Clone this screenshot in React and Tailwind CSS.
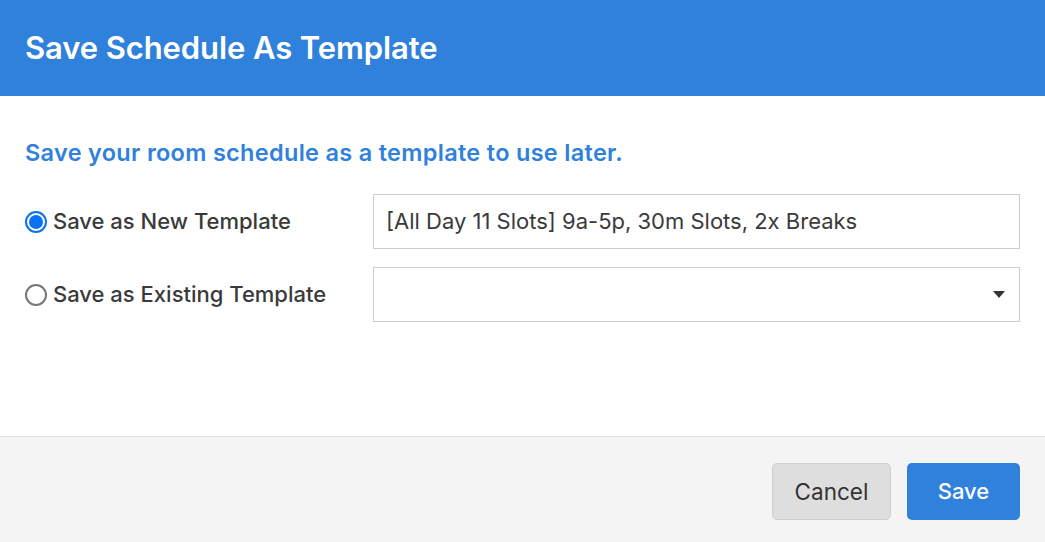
import React from 'react';

export default function App() {
  return (
    <div
      className="w-[1045px] h-[542px] bg-white flex flex-col overflow-hidden"
      style={{ fontFamily: 'Inter, "Noto Sans", sans-serif' }}
    >
      <div className="h-[96px] bg-[#3081dc] flex items-center px-[25px] shrink-0">
        <h1 className="text-white text-[31px] font-semibold tracking-[-0.1px]">Save Schedule As Template</h1>
      </div>

      <div className="flex-1 px-[25px] pt-[43px]">
        <p className="text-[#3081dc] text-[23.5px] font-semibold leading-[28px] tracking-[0.3px]">
          Save your room schedule as a template to use later.
        </p>

        <div className="mt-[27px] flex flex-col gap-[18px]">
          <div className="flex items-center">
            <label className="w-[348px] flex items-center gap-[6px] text-[#3a3a3a] text-[22px] font-medium">
              <span className="w-[22px] h-[22px] rounded-full border-2 border-[#0a72f0] flex items-center justify-center">
                <span className="w-[14px] h-[14px] rounded-full bg-[#0a72f0]" />
              </span>
              Save as New Template
            </label>
            <div className="flex-1 h-[55px] border border-[#cccccc] flex items-center px-[12px] text-[22px] text-[#3a3a3a]">
              [All Day 11 Slots] 9a-5p, 30m Slots, 2x Breaks
            </div>
          </div>

          <div className="flex items-center">
            <label className="w-[348px] flex items-center gap-[6px] text-[#3a3a3a] text-[22px] font-medium">
              <span className="w-[22px] h-[22px] rounded-full border-2 border-[#767676]" />
              Save as Existing Template
            </label>
            <div className="flex-1 h-[55px] border border-[#cccccc] flex items-center justify-end pr-[14px]">
              <svg width="12" height="7" viewBox="0 0 12 7">
                <path d="M0 0 L12 0 L6 7 Z" fill="#333" />
              </svg>
            </div>
          </div>
        </div>
      </div>

      <div className="h-[106px] shrink-0 bg-[#f4f4f4] border-t border-[#e2e2e2] flex items-start justify-end gap-[16px] px-[25px] pt-[26px]">
        <button className="w-[119px] h-[57px] rounded-[5px] bg-[#dedede] border border-[#cfcfcf] text-[#333] text-[22.5px]">
          Cancel
        </button>
        <button className="w-[113px] h-[57px] rounded-[5px] bg-[#3081dc] text-white text-[22px] font-medium">
          Save
        </button>
      </div>
    </div>
  );
}
